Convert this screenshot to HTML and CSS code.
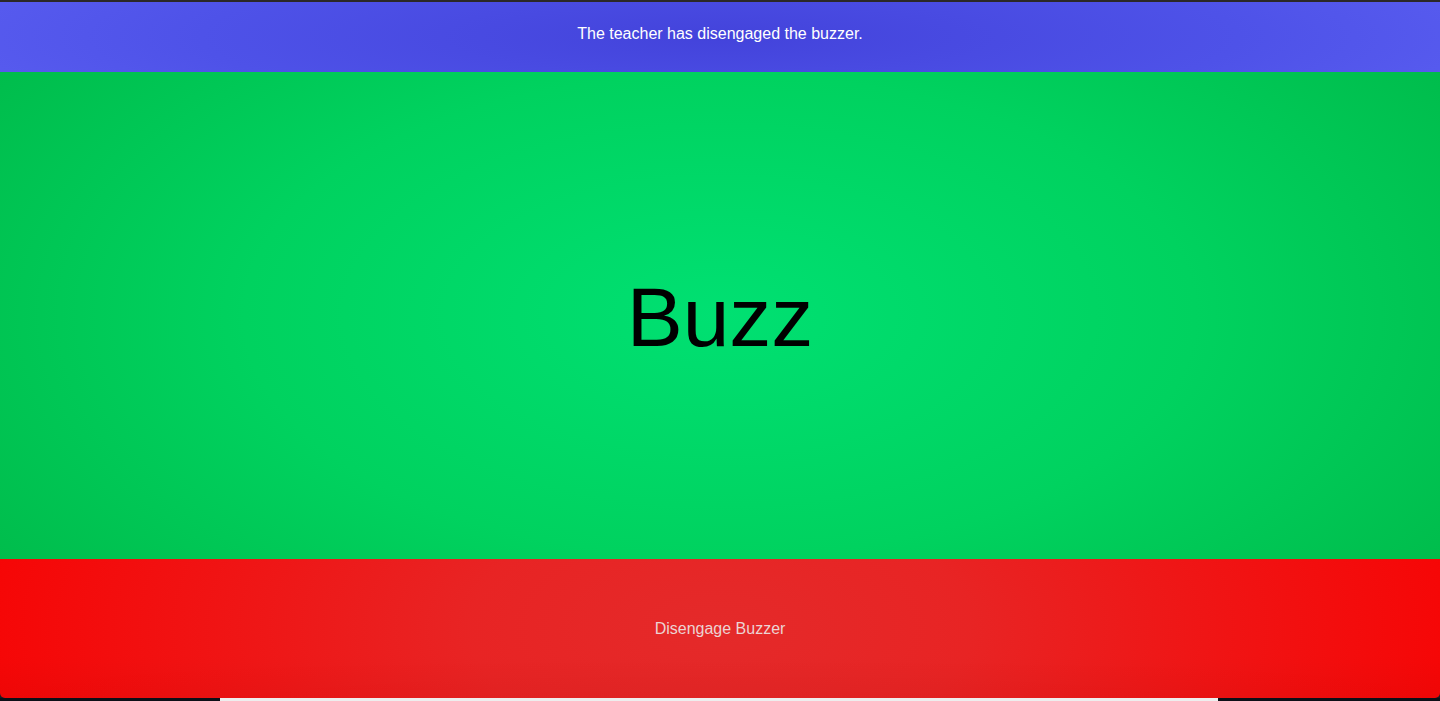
FILE: index.html
```html
<html>
<head>
<title>Buzzer</title>
<link rel="stylesheet" href="styles.css">
</head>
<body>
<div class="page">
  <div class="status">The teacher has disengaged the buzzer.</div>
  <div class="buzz">Buzz</div>
  <button class="disengage">Disengage Buzzer</button>
</div>
<div class="dock"><span class="dock-bar"></span></div>
</body>
</html>
```

FILE: styles.css
```css
html, body {
  margin:0;
  padding:0;
  height:100%;
}
body {
  background:#1c1c22;
  font-family:'Liberation Sans', Arial, sans-serif;
  display:flex;
  flex-direction:column;
  overflow:hidden;
}
.page {
  flex:1;
  display:flex;
  flex-direction:column;
  border-top:2px solid #2b2828;
}
.status {
  height:64px;
  padding-bottom:6px;
  display:flex;
  align-items:center;
  justify-content:center;
  color:#fff;
  font-size:16px;
  background:radial-gradient(ellipse 60% 180% at 50% 50%, #4343db 0%, #4e52e8 60%, #5a5ef1 100%);
}
.buzz {
  flex:1;
  display:flex;
  align-items:center;
  justify-content:center;
  font-size:84px;
  color:#000;
  padding-top:4px;
  background:radial-gradient(ellipse 60% 90% at 50% 50%, #00e072 0%, #00d25f 55%, #00bd4c 100%);
}
.disengage {
  height:139px;
  border:0;
  margin:0;
  padding:0;
  border-radius:0 0 5px 5px;
  font-family:'Liberation Sans', Arial, sans-serif;
  font-size:16px;
  color:#ecd3d3;
  background:
    linear-gradient(to bottom, rgba(140,0,0,0) 70%, rgba(140,0,0,0.08) 100%),
    radial-gradient(ellipse 58% 300% at 50% 50%, #e42a2a 0%, #e82424 30%, #f01414 60%, #f90000 100%);
}
.dock {
  height:3px;
  background:#0d1018;
  display:flex;
}
.dock-bar {
  margin-left:220px;
  width:998px;
  background:#eeeeee;
}
```
